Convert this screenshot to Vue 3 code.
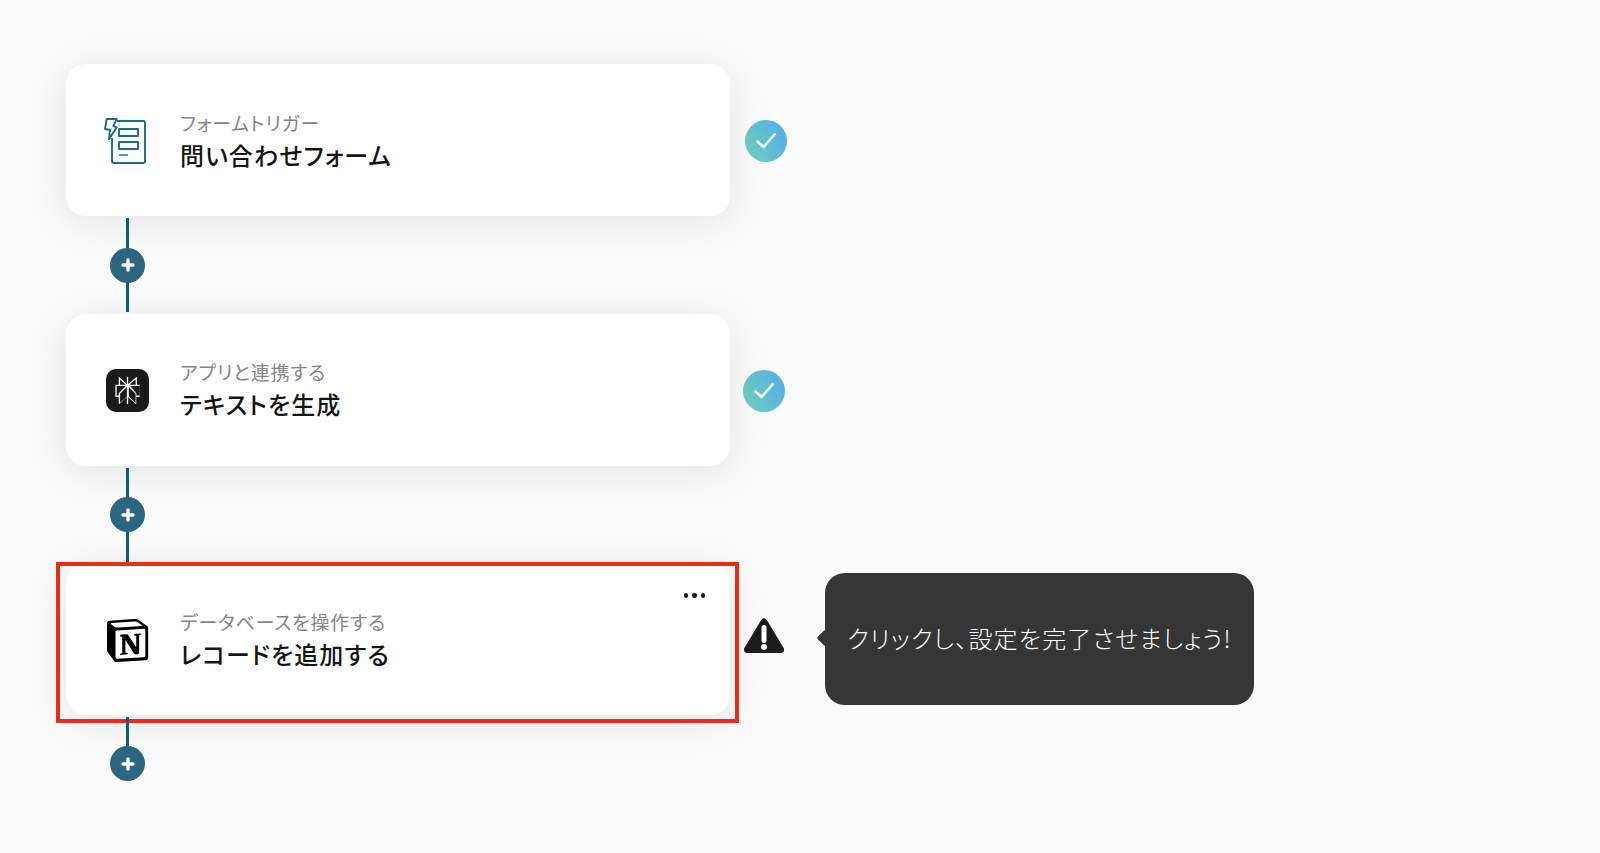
<template>
  <div class="flow">
    <template v-for="(step, index) in steps" :key="step.title">
      <div class="step">
        <div class="card">
          <div class="app-icon">
            <svg v-if="step.icon === 'form'" class="form-icon" width="44" height="48" viewBox="0 0 44 48" fill="none" stroke="#1d6a87" stroke-width="1.9" stroke-linejoin="round">
              <path d="M11 5h26.500a1.500 1.500 0 0 1 1.500 1.500v39a1.500 1.500 0 0 1-1.500 1.500H7.500A1.500 1.500 0 0 1 6 45.500V22" />
              <path d="M.7 3h10L7.300 10l3.400 1.300L3 23.300 4 14l-5-1z" fill="#fff" />
              <rect x="13" y="13" width="19" height="7" />
              <rect x="13" y="26" width="19" height="7" />
              <path d="M13 39h9" stroke-width="1.400" />
            </svg>
            <svg v-else-if="step.icon === 'perplexity'" class="perplexity-icon" width="43" height="43" viewBox="0 0 43 43">
              <rect width="43" height="43" rx="10" fill="#1a1a1a" />
              <svg x="7.500" y="7.500" width="28" height="28" viewBox="0 0 24 24">
                <path fill="#f6f6f6" d="M22.3977 7.0896h-2.3106V.0676l-7.5094 6.3542V.1577h-1.1554v6.1966L4.4904 0v7.0896H1.6023v10.3976h2.8882V24l6.932-6.3591v6.2005h1.1554v-6.0469l6.9318 6.1807v-6.4879h2.8882V7.0896zm-3.4657-4.531v4.531h-5.355l5.355-4.531zm-13.2862.0676 4.8691 4.4634H5.6458V2.6262zM2.7576 16.332V8.245h7.8476l-6.1149 6.1147v1.9723H2.7576zm2.8882-1.4943 5.7772-5.8052v8.2106l-5.7772 5.1785v-7.5839zm13.2862 7.5839-5.7772-5.1788V9.0326l5.7772 5.8052v7.5839zm2.8882-6.1006h-2.2278v-1.9723L14.4 8.245h7.8476v8.0877z" />
              </svg>
            </svg>
            <svg v-else class="notion-icon" width="43" height="43" viewBox="0 0 100 100">
              <path d="M6.017 4.313l55.333-4.087c6.797-.583 8.543-.19 12.817 2.917l17.663 12.443c2.913 2.14 3.883 2.723 3.883 5.053v68.243c0 4.277-1.553 6.807-6.99 7.193L24.467 99.967c-4.08.193-6.023-.39-8.16-3.113L3.3 79.94C.967 76.827 0 74.497 0 71.773V11.113c0-3.497 1.553-6.413 6.017-6.8z" fill="#fff" />
              <path fill-rule="evenodd" d="M61.35.227L6.017 4.313C1.553 4.7 0 7.617 0 11.113v60.66c0 2.723.967 5.053 3.3 8.167l13.007 16.913c2.137 2.723 4.08 3.307 8.16 3.113l64.257-3.89c5.433-.387 6.99-2.917 6.99-7.193V20.64c0-2.21-.873-2.847-3.443-4.733L74.167 3.143c-4.273-3.107-6.02-3.5-12.817-2.917zM25.92 19.523c-5.247.353-6.437.433-9.417-1.99L8.927 11.507c-.77-.78-.383-1.753 1.557-1.947l53.193-3.887c4.467-.39 6.793 1.167 8.54 2.527l9.123 6.61c.39.197 1.36 1.36.193 1.36l-54.933 3.307-.68.047zM19.803 88.3V30.367c0-2.53.777-3.697 3.103-3.893L86 22.78c2.14-.193 3.107 1.167 3.107 3.693v57.547c0 2.53-.39 4.67-3.883 4.863l-60.377 3.5c-3.493.193-5.043-.97-5.043-4.083zm59.6-54.827c.387 1.75 0 3.5-1.75 3.7l-2.91.577v42.773c-2.527 1.36-4.853 2.137-6.797 2.137-3.107 0-3.883-.973-6.21-3.887l-19.03-29.94v28.967l6.02 1.363s0 3.5-4.857 3.5l-13.39.777c-.39-.78 0-2.723 1.357-3.11l3.497-.97v-38.3L30.48 40.667c-.39-1.75.58-4.277 3.3-4.473l14.367-.97 19.8 30.327v-26.83l-5.047-.58c-.39-2.143 1.163-3.7 3.103-3.89l13.4-.78z" fill="#000" />
            </svg>
          </div>
          <div class="card-text">
            <div class="label">{{ step.label }}</div>
            <div class="title">{{ step.title }}</div>
          </div>
          <div v-if="step.warning" class="more"><span></span><span></span><span></span></div>
        </div>

        <div v-if="step.warning" class="highlight"></div>

        <div class="status" :class="{ shifted: index > 0, alert: step.warning }">
          <svg v-if="step.warning" width="40" height="36" viewBox="0 0 40 36">
            <path d="M20 4L36.500 31.500H3.500z" fill="#1c1c1c" stroke="#1c1c1c" stroke-width="7" stroke-linejoin="round" />
            <path d="M20 9.500v13" stroke="#fff" stroke-width="5" stroke-linecap="round" />
            <circle cx="20" cy="29" r="3" fill="#fff" />
          </svg>
          <div v-else class="check">
            <svg width="22" height="18" viewBox="0 0 22 18" fill="none">
              <path d="M2.500 9.500l6 5.500L19.500 2.500" stroke="#fff" stroke-width="2.600" stroke-linecap="round" stroke-linejoin="round" />
            </svg>
          </div>
        </div>

        <div v-if="step.warning" class="tooltip">クリックし、設定を完了させましょう!</div>
      </div>

      <div class="connector" :class="{ last: index === steps.length - 1 }">
        <div class="add">
          <svg width="14" height="14" viewBox="0 0 14 14">
            <path d="M7 2v10M2 7h10" stroke="#fff" stroke-width="3.400" stroke-linecap="round" />
          </svg>
        </div>
      </div>
    </template>
  </div>
</template>

<script setup>
const steps = [
  { icon: 'form', label: 'フォームトリガー', title: '問い合わせフォーム' },
  { icon: 'perplexity', label: 'アプリと連携する', title: 'テキストを生成' },
  { icon: 'notion', label: 'データベースを操作する', title: 'レコードを追加する', warning: true }
];
</script>

<style>
html,
body {
  margin: 0;
  background: #fafafa;
}
</style>

<style scoped>
.flow {
  height: 853px;
  box-sizing: border-box;
  padding: 64px 0 0 66px;
  overflow: hidden;
  font-family: "Noto Sans CJK JP", "Noto Sans", sans-serif;
  font-feature-settings: "palt";
}

.step {
  position: relative;
  display: flex;
  align-items: center;
  height: 152px;
}

.card {
  position: relative;
  display: flex;
  align-items: center;
  box-sizing: border-box;
  width: 664px;
  height: 100%;
  padding-left: 40px;
  background: #fff;
  border-radius: 20px;
  box-shadow: 0 6px 40px rgba(0, 0, 0, 0.09);
}

.app-icon {
  display: flex;
  width: 44px;
  height: 44px;
  align-items: center;
  justify-content: center;
}

.form-icon {
  flex: none;
  overflow: visible;
}

.perplexity-icon {
  flex: none;
  margin: 2px 2px 0 0;
}

.notion-icon {
  flex: none;
  margin-top: 3px;
}

.card-text {
  margin-left: 30px;
}

.label {
  font-size: 19px;
  line-height: 26px;
  letter-spacing: 0.8px;
  color: #858585;
}

.title {
  margin-top: 3px;
  font-size: 24px;
  line-height: 32px;
  font-weight: 500;
  letter-spacing: 1.100px;
  color: #141414;
}

.more {
  position: absolute;
  top: 30px;
  right: 25px;
  display: flex;
  gap: 3.800px;
}

.more span {
  width: 4.500px;
  height: 4.500px;
  border-radius: 50%;
  background: #1a1a1a;
}

.highlight {
  position: absolute;
  top: -1px;
  left: -10px;
  width: 683px;
  height: 161px;
  box-sizing: border-box;
  border: 4px solid #ea2e16;
  pointer-events: none;
}

.status {
  display: flex;
  justify-content: center;
  width: 42px;
  margin-left: 15px;
  margin-top: 2px;
}

.status.shifted {
  margin-left: 13px;
}

.status.alert {
  margin-top: -6px;
}

.check {
  display: flex;
  align-items: center;
  justify-content: center;
  width: 42px;
  height: 42px;
  border-radius: 50%;
  background: linear-gradient(65deg, #70d4ba, #52a9ea);
}

.tooltip {
  position: relative;
  display: flex;
  align-items: center;
  justify-content: center;
  box-sizing: border-box;
  width: 429px;
  height: 132px;
  margin-left: 40px;
  margin-top: -1px;
  padding-bottom: 3px;
  background: #363636;
  border-radius: 20px;
  color: #fff;
  font-size: 24px;
  font-weight: 300;
  letter-spacing: 1.200px;
  white-space: nowrap;
}

.tooltip::before {
  content: "";
  position: absolute;
  top: 59px;
  left: -6px;
  width: 12px;
  height: 12px;
  background: #363636;
  border-radius: 2px;
  transform: rotate(45deg);
}

.connector {
  position: relative;
  display: flex;
  align-items: center;
  justify-content: center;
  width: 35px;
  height: 94px;
  margin: 2px 0 1.500px 44px;
  background: linear-gradient(#115c7d, #115c7d) center / 3px 100% no-repeat;
}

.connector.last {
  height: 64px;
  align-items: flex-end;
}

.add {
  display: flex;
  align-items: center;
  justify-content: center;
  width: 35px;
  height: 35px;
  border-radius: 50%;
  background: #2c6580;
}
</style>
